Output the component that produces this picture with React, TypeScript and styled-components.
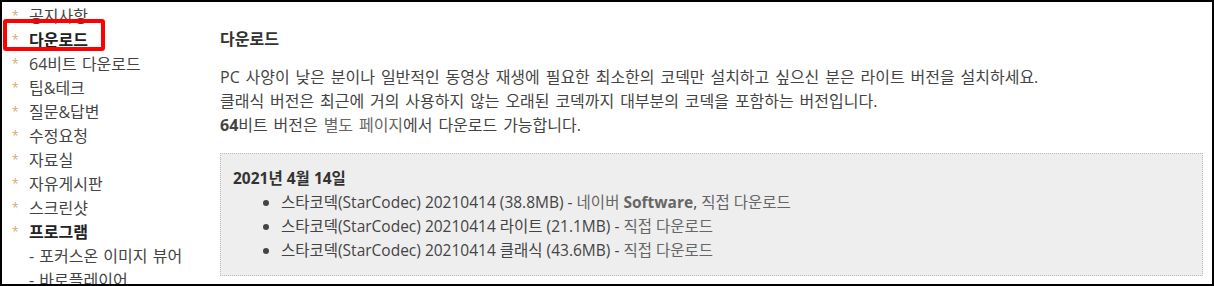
import styled, { createGlobalStyle } from "styled-components";

const GlobalStyle = createGlobalStyle`
  html, body {
    margin: 0;
    padding: 0;
    background: #fff;
  }
  body {
    font-family: "Open Sans", "Noto Sans CJK KR", sans-serif;
  }
`;

const Frame = styled.div`
  position: relative;
  box-sizing: border-box;
  width: 1214px;
  height: 286px;
  border: 2px solid #000;
  overflow: hidden;
  display: flex;
  background: #fff;
  color: #444;
  font-size: 15.5px;
`;

const Sidebar = styled.ul`
  box-sizing: border-box;
  list-style: none;
  margin: 0;
  padding: 2px 0 0 10px;
  width: 208px;
  flex-shrink: 0;
  font-size: 16px;
  word-spacing: 1px;
`;

const NavItem = styled.li<{ $bold?: boolean; $sub?: boolean }>`
  display: flex;
  align-items: center;
  height: 24px;
  line-height: 24px;
  font-weight: ${(p) => (p.$bold ? 700 : 400)};
  color: ${(p) => (p.$bold ? "#222" : "#444")};
  padding-left: ${(p) => (p.$sub ? "17px" : "0")};
  white-space: nowrap;
`;

const Star = styled.span`
  width: 17px;
  color: #d8a86c;
  font-size: 12px;
  font-weight: 400;
`;

const Highlight = styled.div`
  position: absolute;
  left: 1px;
  top: 17px;
  width: 94px;
  height: 24px;
  border: 4px solid #f00;
  border-radius: 3px;
`;

const Main = styled.div`
  flex: 1;
  padding: 25px 9px 0 10px;
`;

const Title = styled.h3`
  margin: 0 0 14px;
  font-size: 16px;
  font-weight: 600;
  line-height: 24px;
  color: #333;
`;

const Para = styled.p`
  margin: 0 0 16px;
  font-size: 16px;
  line-height: 24px;
  word-spacing: 1.7px;
  white-space: nowrap;
`;

const Link = styled.span`
  color: #666;
`;

const Box = styled.div`
  background: #eee;
  border: 1px dotted #bbb;
  padding: 12px 12px 13px;
`;

const DateLine = styled.div`
  font-weight: 700;
  color: #333;
  line-height: 24px;
`;

const Files = styled.ul`
  margin: 0;
  padding-left: 48px;
  line-height: 24px;
  white-space: nowrap;
`;

const nav: { label: string; bold?: boolean; sub?: boolean }[] = [
  { label: "공지사항" },
  { label: "다운로드", bold: true },
  { label: "64비트 다운로드" },
  { label: "팁&테크" },
  { label: "질문&답변" },
  { label: "수정요청" },
  { label: "자료실" },
  { label: "자유게시판" },
  { label: "스크린샷" },
  { label: "프로그램", bold: true },
  { label: "- 포커스온 이미지 뷰어", sub: true },
  { label: "- 바로플레이어", sub: true },
];

export default function App() {
  return (
    <>
      <GlobalStyle />
      <Frame>
        <Sidebar>
          {nav.map((n) => (
            <NavItem key={n.label} $bold={n.bold} $sub={n.sub}>
              {!n.sub && <Star>*</Star>}
              {n.label}
            </NavItem>
          ))}
        </Sidebar>
        <Highlight />
        <Main>
          <Title>다운로드</Title>
          <Para>
            PC 사양이 낮은 분이나 일반적인 동영상 재생에 필요한 최소한의 코덱만 설치하고 싶으신 분은 라이트 버전을 설치하세요.
            <br />
            클래식 버전은 최근에 거의 사용하지 않는 오래된 코덱까지 대부분의 코덱을 포함하는 버전입니다.
            <br />
            <b>64</b>비트 버전은 <Link>별도 페이지</Link>에서 다운로드 가능합니다.
          </Para>
          <Box>
            <DateLine>2021년 4월 14일</DateLine>
            <Files>
              <li>
                스타코덱(StarCodec) 20210414 (38.8MB) - <Link>네이버 <b>Software</b></Link>, <Link>직접 다운로드</Link>
              </li>
              <li>
                스타코덱(StarCodec) 20210414 라이트 (21.1MB) - <Link>직접 다운로드</Link>
              </li>
              <li>
                스타코덱(StarCodec) 20210414 클래식 (43.6MB) - <Link>직접 다운로드</Link>
              </li>
            </Files>
          </Box>
        </Main>
      </Frame>
    </>
  );
}
